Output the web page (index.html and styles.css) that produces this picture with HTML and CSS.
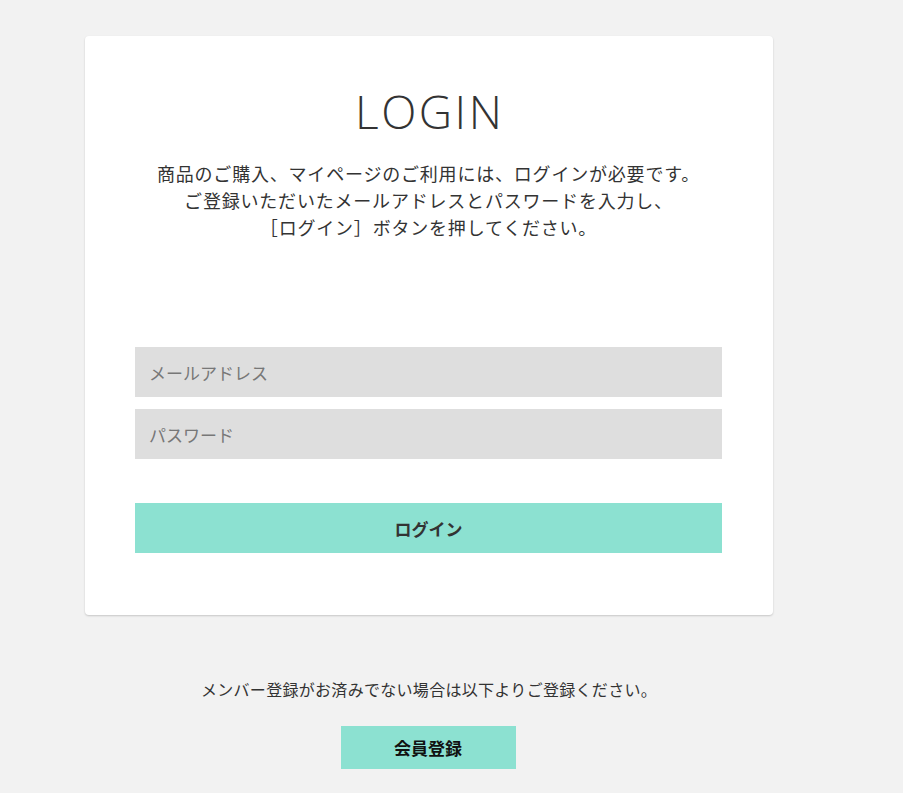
FILE: index.html
```html
<!DOCTYPE html>
<html lang="ja">
<head>
<meta charset="utf-8">
<link rel="stylesheet" href="styles.css">
</head>
<body>
<main class="wrap">
  <section class="card">
    <h1 class="title">LOGIN</h1>
    <p class="lead">商品のご購入、マイページのご利用には、ログインが必要です。<br>ご登録いただいたメールアドレスとパスワードを入力し、<br>［ログイン］ボタンを押してください。</p>
    <form class="form">
      <input class="field" type="email" placeholder="メールアドレス">
      <input class="field" type="password" placeholder="パスワード">
      <button class="btn-login" type="button">ログイン</button>
    </form>
  </section>
  <section class="signup">
    <p class="signup-text">メンバー登録がお済みでない場合は以下よりご登録ください。</p>
    <button class="btn-signup" type="button">会員登録</button>
  </section>
</main>
</body>
</html>
```

FILE: styles.css
```css
html, body {
  margin: 0;
  padding: 0;
  background: #f2f2f2;
  font-family: "Noto Sans CJK JP", "Noto Sans", sans-serif;
  color: #333;
}
.wrap {
  width: 688px;
  margin-left: 85px;
  padding-top: 36px;
}
.card {
  background: #fff;
  border-radius: 4px;
  box-shadow: 0 1px 2px rgba(0,0,0,0.18);
  padding: 50px 51px 62px 50px;
  box-sizing: border-box;
}
.title {
  margin: 0;
  text-align: center;
  font-family: "Open Sans", sans-serif;
  font-weight: 300;
  font-size: 46px;
  line-height: 50px;
  letter-spacing: 2.5px;
  text-indent: 2.5px;
  color: #333;
}
.lead {
  margin: 24px 0 0;
  text-align: center;
  font-size: 18px;
  line-height: 27px;
  letter-spacing: 0.8px;
  color: #333;
}
.form {
  margin-top: 106px;
  display: flex;
  flex-direction: column;
  gap: 12px;
}
.field {
  display: block;
  width: 100%;
  height: 50px;
  box-sizing: border-box;
  border: 0;
  background: #dedede;
  padding: 0 14px;
  font-family: "Noto Sans CJK JP", sans-serif;
  font-size: 17px;
  color: #333;
  outline: none;
}
.field::placeholder {
  color: #777;
}
.btn-login {
  margin-top: 32px;
  height: 50px;
  border: 0;
  background: #8ce1d1;
  font-family: "Noto Sans CJK JP", sans-serif;
  font-weight: 700;
  font-size: 17px;
  color: #333;
}
.signup {
  display: flex;
  flex-direction: column;
  align-items: center;
  padding-top: 62px;
}
.signup-text {
  margin: 0;
  font-size: 16px;
  line-height: 24px;
  letter-spacing: 0.3px;
  color: #333;
}
.btn-signup {
  margin-top: 25px;
  width: 175px;
  height: 43px;
  border: 0;
  background: #8ce1d1;
  font-family: "Noto Sans CJK JP", sans-serif;
  font-weight: 700;
  font-size: 17px;
  color: #111;
  transform: translateX(-1px);
}
```
